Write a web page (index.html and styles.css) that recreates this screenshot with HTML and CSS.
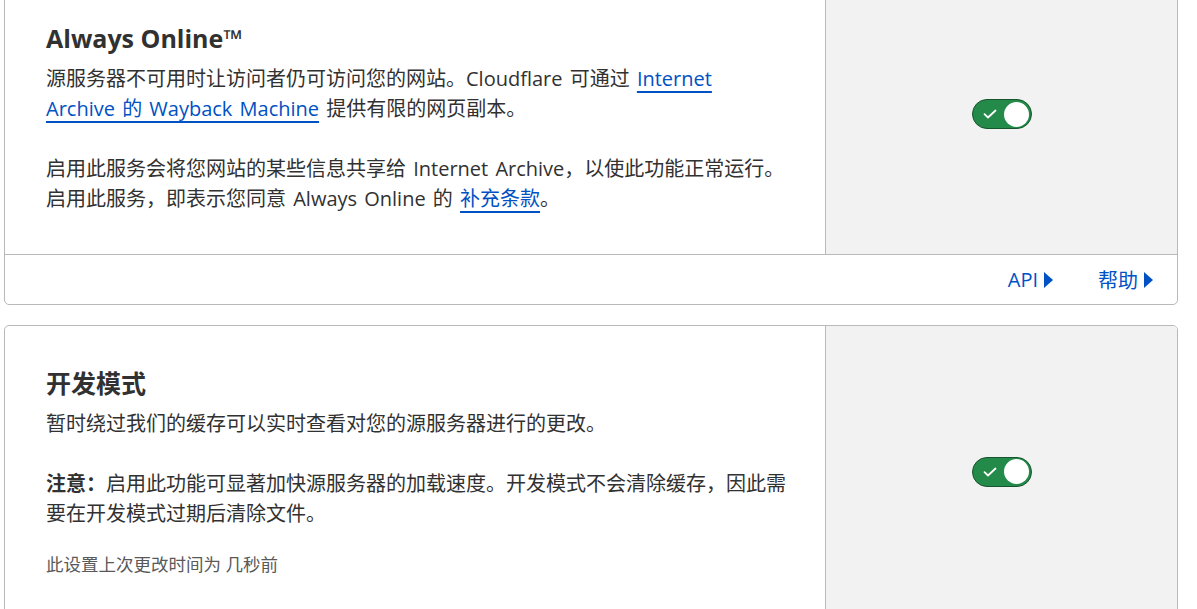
FILE: index.html
```html
<!DOCTYPE html>
<html lang="zh-CN">
<head>
<meta charset="utf-8">
<link rel="stylesheet" href="styles.css">
</head>
<body>
<div class="page">
  <section class="card card-first">
    <div class="card-body">
      <div class="info info-first">
        <h2 class="title">Always Online™</h2>
        <p class="text">源服务器不可用时让访问者仍可访问您的网站。Cloudflare 可通过 <a class="link" href="#">Internet Archive 的 Wayback Machine</a> 提供有限的网页副本。</p>
        <p class="text">启用此服务会将您网站的某些信息共享给 Internet Archive，以使此功能正常运行。启用此服务，即表示您同意 Always Online 的 <a class="link" href="#">补充条款</a>。</p>
      </div>
      <div class="control">
        <span class="toggle">
          <svg class="check" width="14" height="10" viewBox="0 0 14 10"><path d="M1.5 5.2 L5 8.5 L12.5 1.5" fill="none" stroke="#fff" stroke-width="1.8" stroke-linecap="round" stroke-linejoin="round"/></svg>
          <span class="knob"></span>
        </span>
      </div>
    </div>
    <div class="card-footer">
      <a class="foot-link" href="#">API<svg class="tri" width="9" height="16" viewBox="0 0 9 16"><path d="M0 0 L9 8 L0 16 Z" fill="#0051c3"/></svg></a>
      <a class="foot-link" href="#">帮助<svg class="tri" width="9" height="16" viewBox="0 0 9 16"><path d="M0 0 L9 8 L0 16 Z" fill="#0051c3"/></svg></a>
    </div>
  </section>

  <section class="card">
    <div class="card-body">
      <div class="info">
        <h2 class="title">开发模式</h2>
        <p class="text">暂时绕过我们的缓存可以实时查看对您的源服务器进行的更改。</p>
        <p class="text"><strong>注意：</strong>启用此功能可显著加快源服务器的加载速度。开发模式不会清除缓存，因此需要在开发模式过期后清除文件。</p>
        <p class="meta">此设置上次更改时间为 几秒前</p>
      </div>
      <div class="control">
        <span class="toggle">
          <svg class="check" width="14" height="10" viewBox="0 0 14 10"><path d="M1.5 5.2 L5 8.5 L12.5 1.5" fill="none" stroke="#fff" stroke-width="1.8" stroke-linecap="round" stroke-linejoin="round"/></svg>
          <span class="knob"></span>
        </span>
      </div>
    </div>
  </section>
</div>
</body>
</html>
```

FILE: styles.css
```css
* { box-sizing: border-box; }
html, body { margin: 0; padding: 0; background: #fff; }
body {
  font-family: "Open Sans", "Noto Sans CJK SC", sans-serif;
  color: #313131;
  overflow: hidden;
}
.page {
  width: 1178px;
  padding-left: 4px;
  margin-top: -27px;
  display: flex;
  flex-direction: column;
  gap: 20px;
}
.card {
  border: 1px solid #b9b9b9;
  border-radius: 5px;
  background: #fff;
  overflow: hidden;
}
.card-body {
  display: grid;
  grid-template-columns: 820px 1fr;
}
.info {
  padding: 41px 38px 40px 41px;
}
.info-first { padding-top: 48px; }
.title {
  margin: 0 0 10px;
  font-size: 25px;
  line-height: 32px;
  font-weight: 700;
  color: #313131;
}
.text {
  margin: 0 0 30px;
  font-size: 20px;
  line-height: 30px;
  word-spacing: 2px;
}
.text:last-child { margin-bottom: 0; }
.text strong { font-weight: 700; }
.link {
  color: #0051c3;
  text-decoration: underline;
  text-decoration-thickness: 2px;
  text-underline-offset: 5px;
}
.meta {
  margin: -8px 0 0;
  font-size: 17.5px;
  line-height: 26px;
  color: #595959;
}
.control {
  background: #f2f2f2;
  border-left: 1px solid #b9b9b9;
  display: flex;
  align-items: center;
  justify-content: center;
}
.toggle {
  width: 60px;
  height: 30px;
  border-radius: 15px;
  background: #238a4a;
  border: 1px solid #17552e;
  display: flex;
  align-items: center;
  justify-content: space-between;
  padding: 0 2px 0 10px;
}
.check { display: block; }
.knob {
  width: 25px;
  height: 25px;
  border-radius: 50%;
  background: #fff;
}
.card-footer {
  border-top: 1px solid #b9b9b9;
  height: 50px;
  display: flex;
  align-items: center;
  justify-content: flex-end;
  gap: 45px;
  padding-right: 24px;
}
.foot-link {
  color: #0051c3;
  text-decoration: none;
  font-size: 20px;
  display: flex;
  align-items: center;
  gap: 6px;
}
.tri { display: block; }
```
